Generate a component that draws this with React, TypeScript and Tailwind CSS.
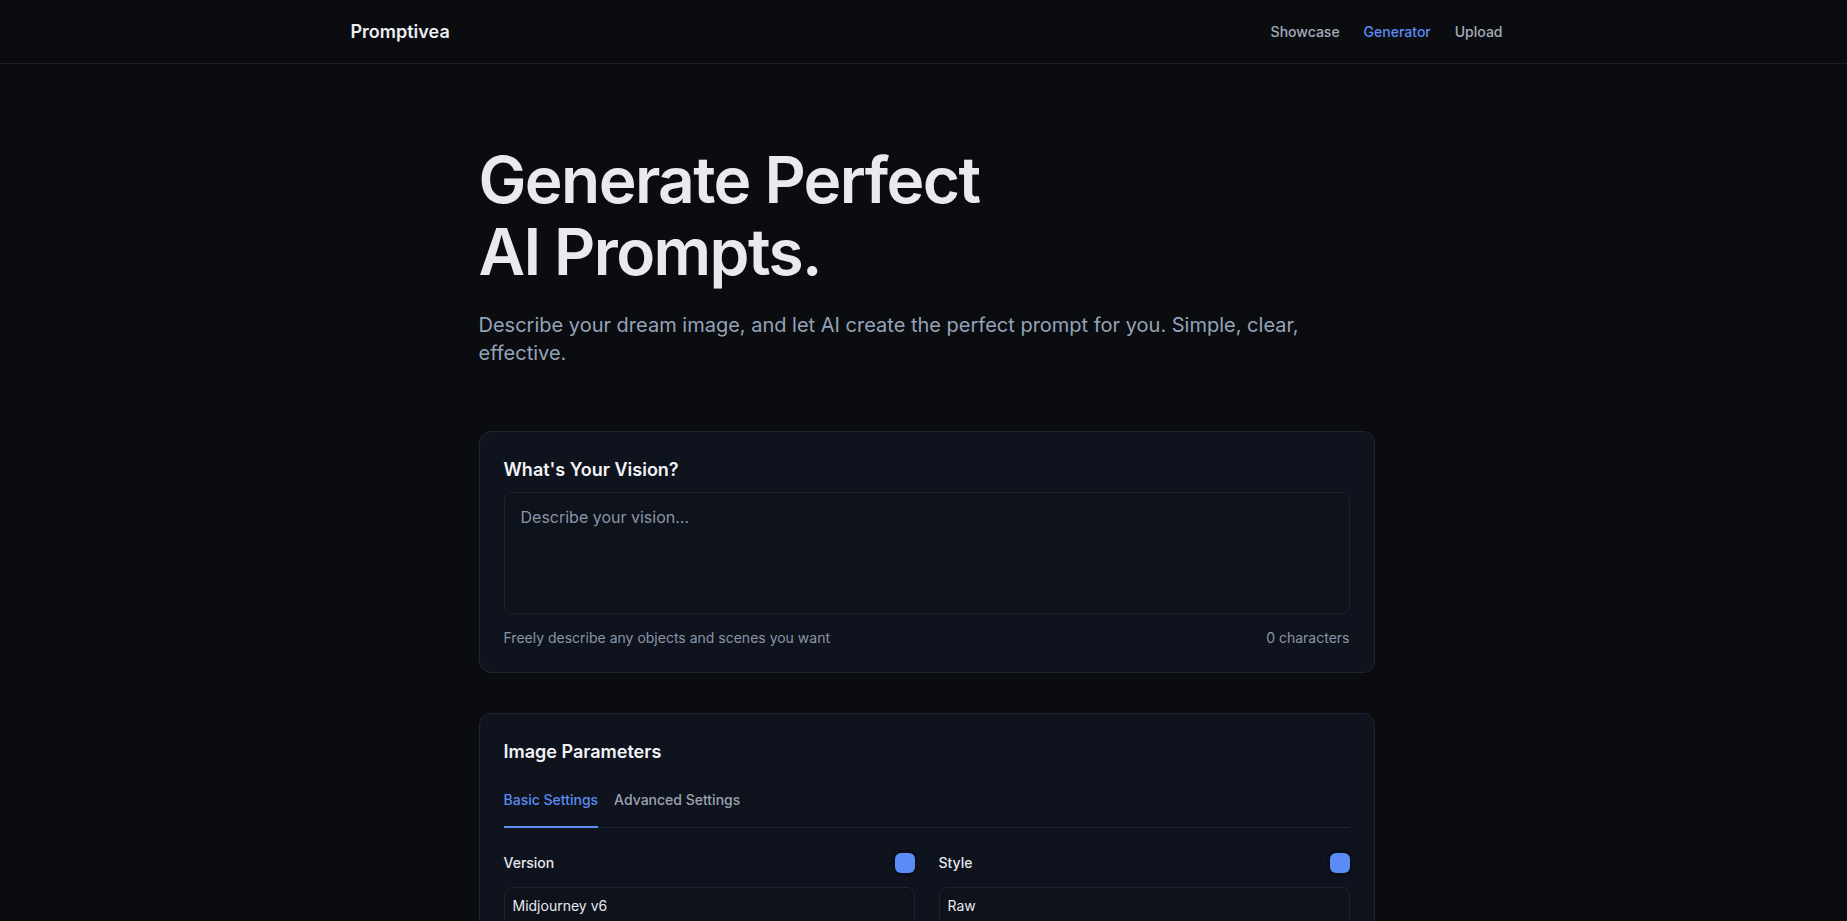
import React, { useState } from "react";

function Field({ label, value }: { label: string; value: string }) {
  return (
    <div>
      <div className="flex h-5 items-center justify-between">
        <span className="text-sm font-medium text-[#e6e8ee]">{label}</span>
        <span className="h-5 w-5 rounded-md bg-[#5b8cf5] shadow-[0_0_0_3px_#0b0f17]" />
      </div>
      <div className="mt-3.5 rounded-lg border border-[#1d2431] bg-[#0d121b] px-2 py-2 text-sm text-[#e6e8ee]">
        {value}
      </div>
    </div>
  );
}

export default function App() {
  const [text, setText] = useState("");
  const [tab, setTab] = useState<"basic" | "advanced">("basic");

  return (
    <div className="min-h-screen bg-[#0b0c10] font-[Inter,sans-serif] text-[#e8eaf0]">
      <header className="h-16 border-b border-[#1c1f27]">
        <div className="h-full pl-[6px]">
          <div className="mx-auto flex h-full max-w-6xl items-center justify-between">
            <span className="text-lg font-semibold text-[#eceef3]">Promptivea</span>
            <nav className="flex items-center gap-6 text-sm font-medium">
              <a className="text-[#a4adbb]">Showcase</a>
              <a className="text-[#5b8cf0]">Generator</a>
              <a className="text-[#a4adbb]">Upload</a>
            </nav>
          </div>
        </div>
      </header>

      <main className="pl-[6px] pb-24 pt-20">
        <div className="mx-auto max-w-4xl">
          <h1 className="text-[64px] font-semibold leading-[1.12] tracking-tight text-[#e8eaf0]">
            Generate Perfect
            <br />
            AI Prompts.
          </h1>
          <p className="mt-6 text-xl leading-7 text-[#94a3b8]">
            Describe your dream image, and let AI create the perfect prompt for you. Simple, clear, effective.
          </p>

          <section className="mt-16 rounded-xl border border-[#1e2533] bg-[#0e131d] p-6">
            <h2 className="mb-2 text-lg font-semibold text-[#f1f3f7]">What's Your Vision?</h2>
            <textarea
              value={text}
              onChange={(e) => setText(e.target.value)}
              placeholder="Describe your vision..."
              className="block h-[122px] w-full resize-none rounded-lg border border-[#1d2431] bg-[#0d121b] px-4 py-3 text-base text-[#e6e8ee] outline-none placeholder:text-[#8b95a8]"
            />
            <div className="mt-3.5 flex items-center justify-between text-sm text-[#8b95a8]">
              <span>Freely describe any objects and scenes you want</span>
              <span>{text.length} characters</span>
            </div>
          </section>

          <section className="mt-10 rounded-xl border border-[#1e2533] bg-[#0e131d] p-6">
            <h2 className="mb-6 text-lg font-semibold text-[#f1f3f7]">Image Parameters</h2>
            <div className="flex gap-4 border-b border-[#1e2533]">
              <button
                onClick={() => setTab("basic")}
                className={
                  tab === "basic"
                    ? "-mb-px border-b-2 border-[#5b8cf0] pb-4 text-sm font-medium text-[#5b8cf0]"
                    : "-mb-px border-b-2 border-transparent pb-4 text-sm font-medium text-[#9ca3af]"
                }
              >
                Basic Settings
              </button>
              <button
                onClick={() => setTab("advanced")}
                className={
                  tab === "advanced"
                    ? "-mb-px border-b-2 border-[#5b8cf0] pb-4 text-sm font-medium text-[#5b8cf0]"
                    : "-mb-px border-b-2 border-transparent pb-4 text-sm font-medium text-[#9ca3af]"
                }
              >
                Advanced Settings
              </button>
            </div>
            <div className="grid grid-cols-2 gap-x-6 gap-y-6 pt-[25px]">
              <Field label="Version" value="Midjourney v6" />
              <Field label="Style" value="Raw" />
              <Field label="Aspect Ratio" value="16:9" />
              <Field label="Quality" value="1" />
              <Field label="Stylize" value="250" />
              <Field label="Chaos" value="0" />
            </div>
          </section>
        </div>
      </main>
    </div>
  );
}
